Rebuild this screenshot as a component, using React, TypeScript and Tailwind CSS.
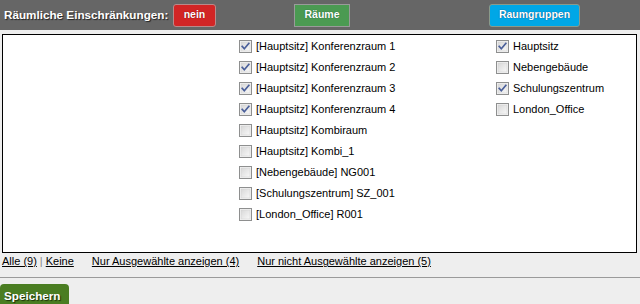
import React from "react";

function Box({ checked }: { checked: boolean }) {
  return (
    <svg width="13" height="13" viewBox="0 0 13 13" className="shrink-0 block">
      <defs>
        <linearGradient id="cbg" x1="0" y1="0" x2="1" y2="1">
          <stop offset="0" stopColor="#d8d8d8" />
          <stop offset="1" stopColor="#f8f8f8" />
        </linearGradient>
      </defs>
      <rect x="0.5" y="0.5" width="12" height="12" fill="#f4f4f4" stroke="#8e8f8f" />
      <rect x="2" y="2" width="9" height="9" fill="url(#cbg)" stroke="#cfcfcf" strokeWidth="0.5" />
      {checked && (
        <path d="M3.2 6.4 L5.3 8.8 L9.8 3.4" fill="none" stroke="#4a5f9a" strokeWidth="1.7" strokeLinecap="square" />
      )}
    </svg>
  );
}

function Item({ label, checked }: { label: string; checked: boolean }) {
  return (
    <div className="flex items-center h-[21px] gap-[4px]">
      <Box checked={checked} />
      <span className="text-[11px] text-black leading-none whitespace-nowrap">{label}</span>
    </div>
  );
}

const rooms: [string, boolean][] = [
  ["[Hauptsitz] Konferenzraum 1", true],
  ["[Hauptsitz] Konferenzraum 2", true],
  ["[Hauptsitz] Konferenzraum 3", true],
  ["[Hauptsitz] Konferenzraum 4", true],
  ["[Hauptsitz] Kombiraum", false],
  ["[Hauptsitz] Kombi_1", false],
  ["[Nebengebäude] NG001", false],
  ["[Schulungszentrum] SZ_001", false],
  ["[London_Office] R001", false],
];

const groups: [string, boolean][] = [
  ["Hauptsitz", true],
  ["Nebengebäude", false],
  ["Schulungszentrum", true],
  ["London_Office", false],
];

export default function App() {
  return (
    <div
      className="w-[640px] h-[304px] bg-[#eeeeee] overflow-hidden"
      style={{ fontFamily: '"Liberation Sans", Arial, sans-serif' }}
    >
      <div className="h-[30px] bg-[#666666] flex items-center">
        <div className="w-[173px] pl-[4px] text-white font-bold text-[11.7px] whitespace-nowrap [text-shadow:1px_1px_1px_#222]">
          Räumliche Einschränkungen:
        </div>
        <button className="w-[43px] h-[23px] bg-[#d22525] border border-[#b88a8a] rounded-[3px] text-white font-bold text-[10.5px] [text-shadow:0_0_1px_#600]">
          nein
        </button>
        <button className="ml-[78px] w-[56px] h-[23px] bg-[#4b9a52] border border-[#9a9a9a] text-white font-bold text-[10.5px] [text-shadow:0_0_1px_#153]">
          Räume
        </button>
        <button className="ml-[139px] w-[91px] h-[23px] bg-[#00a7e6] border border-[#8a9a8a] rounded-[3px] text-white font-bold text-[10.5px] [text-shadow:0_0_1px_#036]">
          Raumgruppen
        </button>
      </div>

      <div className="mt-[4px] ml-[2px] w-[635px] h-[219px] border border-black bg-white">
        <div className="grid grid-cols-[236px_257px_1fr] pt-px">
          <div />
          <div className="flex flex-col">
            {rooms.map(([l, c]) => (
              <Item key={l} label={l} checked={c} />
            ))}
          </div>
          <div className="flex flex-col">
            {groups.map(([l, c]) => (
              <Item key={l} label={l} checked={c} />
            ))}
          </div>
        </div>
      </div>

      <div className="h-[17px] flex items-center pl-[2px] text-[11px] text-black whitespace-nowrap">
        <a className="underline cursor-pointer">Alle (9)</a>
        <span className="text-[#888] mx-[3px]">|</span>
        <a className="underline cursor-pointer">Keine</a>
        <a className="underline cursor-pointer ml-[18px]">Nur Ausgewählte anzeigen (4)</a>
        <a className="underline cursor-pointer ml-[18px]">Nur nicht Ausgewählte anzeigen (5)</a>
      </div>

      <div className="mt-[7px] border-t border-[#9a9a9a]" />

      <div className="mt-[5px]">
        <button className="w-[69px] h-[24px] bg-[#4a7d22] rounded-[4px] text-white font-bold text-[11.7px] text-left pl-[4px] [text-shadow:1px_1px_1px_#1a3008]">
          Speichern
        </button>
      </div>
    </div>
  );
}
